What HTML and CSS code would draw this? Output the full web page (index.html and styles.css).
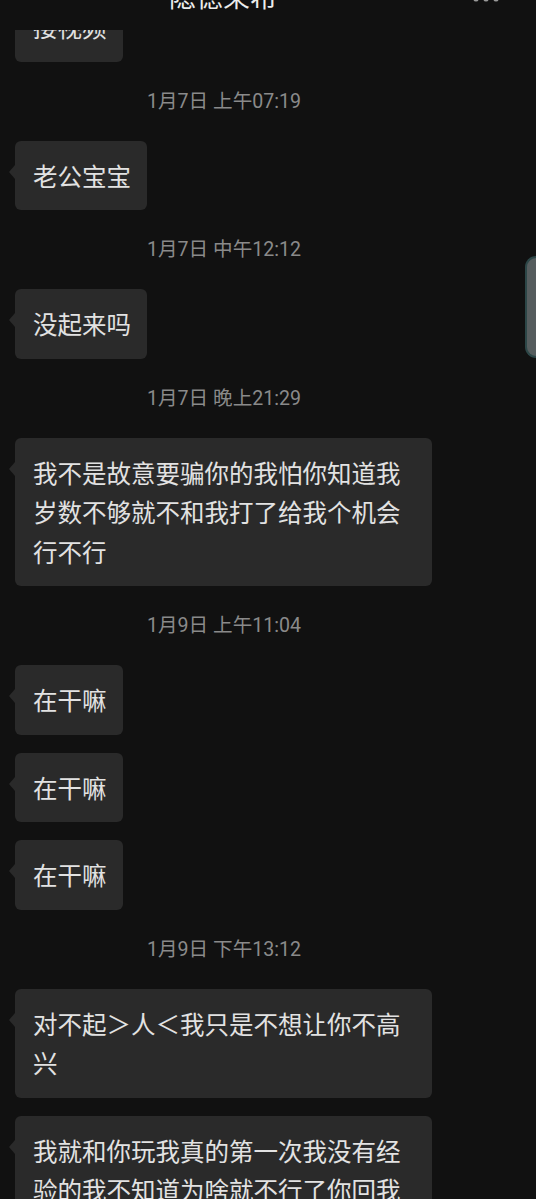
FILE: index.html
```html
<!DOCTYPE html>
<html lang="zh-CN">
<head>
<meta charset="utf-8">
<title>隐德莱希</title>
<link rel="stylesheet" href="styles.css">
</head>
<body>
<header class="topbar">
  <div class="title">隐德莱希</div>
  <svg class="more" width="30" height="8" viewBox="0 0 30 8"><circle cx="4" cy="-1" r="2.6"/><circle cx="14" cy="-1" r="2.6"/><circle cx="24" cy="-1" r="2.6"/></svg>
</header>
<div class="handle"></div>
<main class="chat">
  <div class="bubble">接视频</div>
  <div class="time">1月7日 上午07:19</div>
  <div class="bubble">老公宝宝</div>
  <div class="time">1月7日 中午12:12</div>
  <div class="bubble">没起来吗</div>
  <div class="time">1月7日 晚上21:29</div>
  <div class="bubble">我不是故意要骗你的我怕你知道我岁数不够就不和我打了给我个机会行不行</div>
  <div class="time">1月9日 上午11:04</div>
  <div class="bubble">在干嘛</div>
  <div class="bubble">在干嘛</div>
  <div class="bubble">在干嘛</div>
  <div class="time">1月9日 下午13:12</div>
  <div class="bubble">对不起＞人＜我只是不想让你不高兴</div>
  <div class="bubble">我就和你玩我真的第一次我没有经验的我不知道为啥就不行了你回我</div>
</main>
</body>
</html>
```
FILE: styles.css
```css
html, body {
  margin: 0;
  padding: 0;
  background: #111111;
  height: 100%;
  overflow: hidden;
}
body {
  font-family: "Noto Sans CJK SC", "Noto Sans", sans-serif;
  color: #e4e4e4;
}
.topbar {
  position: fixed;
  top: 0;
  left: 0;
  right: 0;
  height: 30px;
  background: #111111;
  z-index: 5;
  overflow: hidden;
}
.title {
  position: absolute;
  top: -18px;
  left: 168px;
  width: 110px;
  text-align: center;
  font-size: 27px;
  line-height: 28px;
  color: #ececec;
}
.more {
  position: absolute;
  top: 0;
  left: 472px;
  fill: #9a9a9a;
}
.handle {
  position: fixed;
  right: 0;
  top: 256px;
  width: 9px;
  height: 98px;
  background: #565d5e;
  border: 2px solid #2c4647;
  border-right: none;
  border-radius: 11px 0 0 11px;
  z-index: 4;
}
.chat {
  display: flex;
  flex-direction: column;
  align-items: flex-start;
  gap: 18px;
  margin-top: -8px;
  padding-left: 15px;
}
.bubble {
  position: relative;
  box-sizing: border-box;
  max-width: 417px;
  background: #2a2a2a;
  border-radius: 6px;
  padding: 15px 16px 15px 18px;
  font-size: 24.5px;
  line-height: 39.5px;
  color: #e2e2e2;
}
.bubble::before {
  content: "";
  position: absolute;
  left: -6px;
  top: 24px;
  border-top: 7px solid transparent;
  border-bottom: 7px solid transparent;
  border-right: 6px solid #2a2a2a;
}
.time {
  align-self: stretch;
  margin: -18px 103px -18px 0;
  text-align: center;
  font-family: Roboto, "Noto Sans CJK SC", sans-serif;
  font-size: 19.6px;
  line-height: 79px;
  color: #8a8a8a;
}
```
